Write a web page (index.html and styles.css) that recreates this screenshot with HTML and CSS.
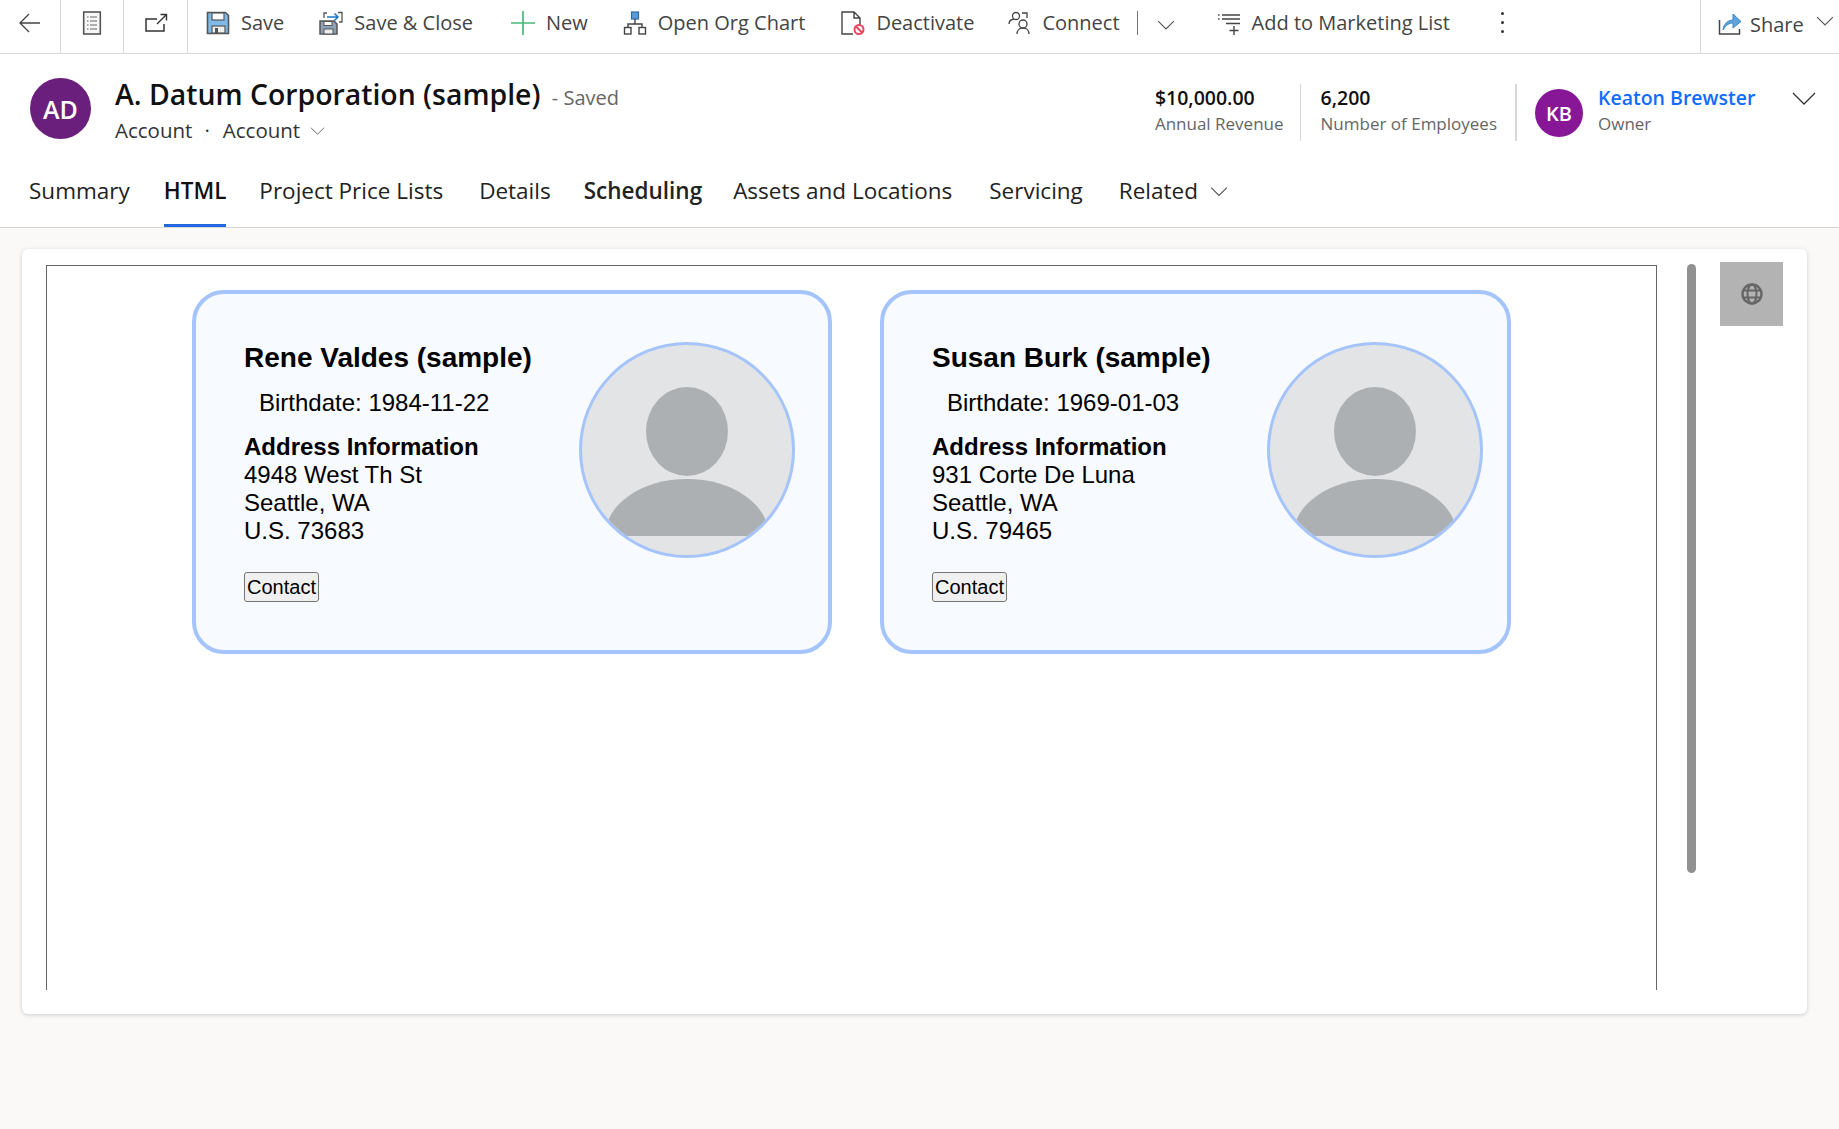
FILE: index.html
```html
<!DOCTYPE html>
<html lang="en">
<head>
  <meta charset="UTF-8">
  <meta name="viewport" content="width=device-width, initial-scale=1.0">
  <title>A. Datum Corporation (sample)</title>
  <link rel="stylesheet" href="styles.css">
</head>
<body>
  <nav class="command-bar">
    <div class="cmd-cell cmd-back">
      <svg viewBox="0 0 24 24" width="24" height="24"><path d="M22 12H2M11 3l-9 9 9 9" fill="none" stroke="#444" stroke-width="1.3"/></svg>
    </div>
    <div class="cmd-cell cmd-form">
      <svg viewBox="0 0 24 24" width="24" height="24"><rect x="3.7" y="1" width="16.6" height="22" fill="#f6f6f6" stroke="#555" stroke-width="1.6"/><path d="M7 6h1.5M10 6h7M7 10h1.5M10 10h7M7 14h1.5M10 14h7M7 18h1.5M10 18h7" stroke="#666" stroke-width="1.1"/></svg>
    </div>
    <div class="cmd-cell cmd-popout">
      <svg viewBox="0 0 24 24" width="24" height="24"><path d="M13 8H2v12h18v-7" fill="none" stroke="#333" stroke-width="1.5"/><path d="M13 13l9-9M16.5 3.5h6v6" fill="none" stroke="#333" stroke-width="1.4"/></svg>
    </div>
    <button class="cmd-btn cmd-save">
      <svg viewBox="0 0 24 24" width="24" height="24"><path d="M1.5 1.5h18l3 3v18h-21z" fill="#7fbbe9" stroke="#555" stroke-width="1.6"/><rect x="6" y="2" width="12" height="7" fill="#fff" stroke="#555" stroke-width="1.2"/><rect x="6" y="15" width="13" height="7" fill="#eee" stroke="#555" stroke-width="1.2"/><rect x="9" y="17" width="3" height="5" fill="#555"/></svg>
      Save
    </button>
    <button class="cmd-btn cmd-save-close">
      <svg viewBox="0 0 24 24" width="24" height="24"><path d="M1 10h14l3 3v10H1z" fill="#8da3b5" stroke="#555" stroke-width="1.5"/><rect x="5" y="10.5" width="8" height="4" fill="#fff" stroke="#555"/><rect x="5" y="18" width="9" height="5" fill="#eee" stroke="#555"/><path d="M5 7V2h3M19 1.5h4V11h-3" fill="none" stroke="#555" stroke-width="1.3"/><path d="M8 6h11M15.5 2.5 19 6l-3.5 3.5" fill="none" stroke="#1f78c4" stroke-width="1.5"/></svg>
      Save &amp; Close
    </button>
    <button class="cmd-btn cmd-new">
      <svg viewBox="0 0 24 24" width="24" height="24"><path d="M12 0v24M0 12h24" stroke="#4cb878" stroke-width="1.7"/></svg>
      New
    </button>
    <button class="cmd-btn cmd-org">
      <svg viewBox="0 0 24 24" width="24" height="24"><rect x="8.5" y="1" width="7" height="7" fill="#5b9bd8" stroke="#2c6ca8" stroke-width="1.2"/><path d="M12 8v5M5 16v-3h14v3" fill="none" stroke="#444" stroke-width="1.4"/><rect x="1.5" y="16.5" width="6.5" height="6.5" fill="#fff" stroke="#444" stroke-width="1.4"/><rect x="16" y="16.5" width="6.5" height="6.5" fill="#fff" stroke="#444" stroke-width="1.4"/></svg>
      Open Org Chart
    </button>
    <button class="cmd-btn cmd-deact">
      <svg viewBox="0 0 24 24" width="24" height="24"><path d="M12 23H1V1h12l6 6v9M13 1.5V7h6" fill="none" stroke="#444" stroke-width="1.4"/><circle cx="18" cy="18.5" r="4.5" fill="#fff" stroke="#e8475f" stroke-width="2"/><path d="M15 15.5l6 6" stroke="#e8475f" stroke-width="2"/></svg>
      Deactivate
    </button>
    <button class="cmd-btn cmd-connect">
      <svg viewBox="0 0 24 24" width="24" height="24"><circle cx="9" cy="5" r="3.5" fill="none" stroke="#444" stroke-width="1.3"/><path d="M2 13c0-3 2-4.5 5-5" fill="none" stroke="#444" stroke-width="1.3"/><circle cx="16" cy="13" r="4" fill="none" stroke="#444" stroke-width="1.3"/><path d="M10 23c0-3 2-6 6-6s6 3 6 6M15 2h5v5" fill="none" stroke="#444" stroke-width="1.3"/></svg>
      Connect
    </button>
    <span class="cmd-sep"></span>
    <svg class="chevron cmd-more" viewBox="0 0 16 16" width="18" height="18"><path d="M1 4.5l7 7 7-7" fill="none" stroke="#555" stroke-width="1"/></svg>
    <button class="cmd-btn cmd-market">
      <svg viewBox="0 0 24 24" width="24" height="24"><path d="M1 4h1.5M1 8h1.5M5 4h18M5 8h18M9 12.5h14" fill="none" stroke="#444" stroke-width="1.3"/><path d="M17 15v9M12.5 19.5h9" stroke="#444" stroke-width="1.4"/></svg>
      Add to Marketing List
    </button>
    <span class="cmd-dots"><i></i><i></i><i></i></span>
    <div class="cmd-share">
      <svg viewBox="0 0 24 24" width="24" height="24"><path d="M1.5 8v14h20v-5" fill="none" stroke="#444" stroke-width="1.5"/><path d="M5 18c.5-6 5-10 10-10V2l8 7.5-8 6.5v-5c-4 0-7 2-10 7z" fill="#5ea3dc" stroke="#3f86c4"/></svg>
      <span>Share</span>
      <svg class="chevron" viewBox="0 0 16 16" width="18" height="18"><path d="M1 4.5l7 7 7-7" fill="none" stroke="#555" stroke-width="1"/></svg>
    </div>
  </nav>

  <header class="record-header">
    <div class="avatar avatar-ad">AD</div>
    <div class="record-title">
      <h1>A. Datum Corporation (sample) <span class="saved">- Saved</span></h1>
      <div class="record-type">
        <span>Account</span><span class="dot">·</span><span>Account</span>
        <svg class="chevron" viewBox="0 0 16 16" width="15" height="15"><path d="M1 5l7 7 7-7" fill="none" stroke="#666" stroke-width="1"/></svg>
      </div>
    </div>
    <div class="header-fields">
      <div class="field field-revenue"><strong>$10,000.00</strong><span>Annual Revenue</span></div>
      <div class="field field-employees"><strong>6,200</strong><span>Number of Employees</span></div>
      <div class="owner">
        <div class="avatar avatar-kb">KB</div>
        <div class="field"><a href="#">Keaton Brewster</a><span>Owner</span></div>
        <svg class="chevron" viewBox="0 0 24 24" width="24" height="24"><path d="M1 7l11 11L23 7" fill="none" stroke="#333" stroke-width="1.3"/></svg>
      </div>
    </div>
  </header>

  <div class="tabs">
    <a class="tab">Summary</a>
    <a class="tab tab-html active">HTML</a>
    <a class="tab tab-price">Project Price Lists</a>
    <a class="tab tab-details">Details</a>
    <a class="tab tab-sched">Scheduling</a>
    <a class="tab tab-assets">Assets and Locations</a>
    <a class="tab tab-serv">Servicing</a>
    <a class="tab tab-related">Related
      <svg class="chevron" viewBox="0 0 16 16" width="18" height="18"><path d="M1 5l7 7 7-7" fill="none" stroke="#555" stroke-width="1"/></svg>
    </a>
  </div>

  <main class="content">
    <section class="panel">
      <div class="web-frame">
        <article class="contact-card">
          <div class="contact-info">
            <h2>Rene Valdes (sample)</h2>
            <p class="birthdate">Birthdate: 1984-11-22</p>
            <h3>Address Information</h3>
            <p class="address">4948 West Th St<br>Seattle, WA<br>U.S. 73683</p>
            <button class="contact-btn">Contact</button>
          </div>
          <div class="photo"><div class="photo-head"></div><div class="photo-body"></div></div>
        </article>
        <article class="contact-card contact-card-narrow">
          <div class="contact-info">
            <h2>Susan Burk (sample)</h2>
            <p class="birthdate">Birthdate: 1969-01-03</p>
            <h3>Address Information</h3>
            <p class="address">931 Corte De Luna<br>Seattle, WA<br>U.S. 79465</p>
            <button class="contact-btn">Contact</button>
          </div>
          <div class="photo"><div class="photo-head"></div><div class="photo-body"></div></div>
        </article>
      </div>
      <div class="scroll-thumb"></div>
      <div class="globe-box">
        <svg viewBox="0 0 24 24" width="24" height="24"><circle cx="12" cy="12" r="9.5" fill="none" stroke="#666" stroke-width="2.4"/><ellipse cx="12" cy="12" rx="4.5" ry="9.5" fill="none" stroke="#666" stroke-width="2"/><path d="M3 8.5h18M3 15.5h18" stroke="#666" stroke-width="2"/></svg>
      </div>
    </section>
  </main>
</body>
</html>
```

FILE: styles.css
```css
* {
  box-sizing: border-box;
}

html, body {
  height: 100%;
}

body {
  margin: 0;
  background-color: #faf9f8;
  color: #222;
  font-family: "Open Sans", "Noto Sans", sans-serif;
  overflow: hidden;
}

/* command bar */
.command-bar {
  display: flex;
  align-items: center;
  height: 54px;
  background: #fff;
  border-bottom: 1px solid #d8d8d8;
  font-size: 20px;
  color: #444;
}

.cmd-cell {
  display: flex;
  align-items: center;
  justify-content: center;
  height: 53px;
  padding-bottom: 8px;
  border-right: 1px solid #d8d8d8;
}

.cmd-back { width: 61px; }
.cmd-form { width: 63px; }
.cmd-popout { width: 64px; }

.cmd-btn {
  display: flex;
  align-items: center;
  gap: 11px;
  padding: 0 0 8px;
  border: none;
  background: none;
  font: inherit;
  color: inherit;
}

.cmd-save { margin-left: 18px; }
.cmd-save-close { margin-left: 35px; }
.cmd-new { margin-left: 38px; }
.cmd-org { margin-left: 35px; }
.cmd-deact { margin-left: 36px; }
.cmd-connect { margin-left: 33px; }
.cmd-market { margin-left: 42px; }

.cmd-sep {
  width: 1px;
  height: 24px;
  margin: 0 0 8px 17px;
  background: #777;
}

.cmd-more {
  margin: 0 0 4px 19px;
}

.cmd-dots {
  display: flex;
  flex-direction: column;
  gap: 6px;
  margin: 0 0 8px 51px;
}

.cmd-dots i {
  width: 3px;
  height: 3px;
  border-radius: 50%;
  background: #333;
}

.cmd-share {
  display: flex;
  align-items: center;
  gap: 8px;
  width: 139px;
  height: 53px;
  margin-left: auto;
  padding: 0 0 5px 17px;
  border-left: 1px solid #d8d8d8;
}

.cmd-share .chevron {
  margin: 0 0 6px 4px;
}

/* record header */
.record-header {
  display: flex;
  align-items: flex-start;
  height: 100px;
  padding: 24px 0 0 30px;
  background: #fff;
}

.avatar {
  display: flex;
  align-items: center;
  justify-content: center;
  border-radius: 50%;
  color: #fff;
  font-weight: 600;
}

.avatar-ad {
  width: 61px;
  height: 61px;
  background: #6b1f7c;
  font-size: 25px;
}

.avatar-kb {
  width: 48px;
  height: 48px;
  margin-top: 5px;
  margin-right: 15px;
  background: #881798;
  font-size: 20px;
}

.record-title {
  margin-left: 24px;
  margin-top: -2px;
}

.record-title h1 {
  margin: 0;
  font-size: 28.4px;
  line-height: 37px;
  font-weight: 600;
  color: #111;
}

.saved {
  margin-left: 4px;
  font-size: 20px;
  font-weight: 400;
  color: #666;
}

.record-type {
  display: flex;
  align-items: center;
  font-size: 20.5px;
  color: #333;
}

.record-type .dot {
  margin: 0 13px 0 12px;
}

.record-type .chevron {
  margin-left: 10px;
}

.header-fields {
  display: flex;
  margin-left: auto;
  padding-top: 6px;
}

.field {
  display: flex;
  flex-direction: column;
  padding-top: 1px;
  line-height: 26px;
}

.field strong {
  font-size: 19.5px;
  font-weight: 600;
  color: #111;
}

.field span {
  font-size: 17px;
  color: #666;
}

.field a {
  font-size: 19.5px;
  font-weight: 600;
  color: #0f6cff;
  text-decoration: none;
}

.field-revenue {
  height: 57px;
  padding-right: 16px;
  border-right: 1px solid #d8d8d8;
}

.field-employees {
  height: 57px;
  padding-left: 20px;
  padding-right: 18px;
  border-right: 2px solid #d8d8d8;
}

.owner {
  display: flex;
  align-items: flex-start;
  width: 322px;
  padding-left: 18px;
}

.owner .chevron {
  margin-left: 37px;
  margin-top: 2px;
}

/* tabs */
.tabs {
  display: flex;
  align-items: stretch;
  height: 74px;
  padding-left: 29px;
  background: #fff;
  border-bottom: 1px solid #d8d8d8;
  font-size: 22.5px;
  color: #222;
}

.tab {
  display: flex;
  align-items: center;
  gap: 12px;
  height: 73px;
  padding-top: 3px;
  border-bottom: 3px solid transparent;
}

.tab-html { margin-left: 34px; }
.tab-price { margin-left: 33px; }
.tab-details { margin-left: 36px; }
.tab-sched { margin-left: 33px; font-weight: 600; }
.tab-assets { margin-left: 31px; }
.tab-serv { margin-left: 37px; }
.tab-related { margin-left: 36px; }

.tab.active {
  font-weight: 600;
  color: #111;
  border-bottom-color: #2266e3;
}

/* panel holding the web resource */
.content {
  padding: 21px 32px 0 22px;
}

.panel {
  position: relative;
  height: 765px;
  padding: 16px 0 0 24px;
  background: #fff;
  border-radius: 6px;
  box-shadow: 0 1px 4px rgba(0, 0, 0, 0.18);
}

.web-frame {
  display: flex;
  justify-content: center;
  align-items: flex-start;
  gap: 48px;
  width: 1611px;
  height: 725px;
  padding-top: 24px;
  border: 1px solid #666;
  border-bottom: none;
  font-family: "Liberation Sans", Arial, sans-serif;
  color: #000;
}

.scroll-thumb {
  position: absolute;
  left: 1665px;
  top: 15px;
  width: 9px;
  height: 609px;
  border-radius: 5px;
  background: #919191;
}

.globe-box {
  position: absolute;
  left: 1698px;
  top: 13px;
  display: flex;
  align-items: center;
  justify-content: center;
  width: 63px;
  height: 64px;
  background: #b3b3b3;
}

/* contact cards */
.contact-card {
  display: flex;
  align-items: flex-start;
  height: 364px;
  padding: 48px 33px 0 48px;
  background: #f7faff;
  border: 4px solid #a4c4fb;
  border-radius: 32px;
}

.contact-card-narrow {
  padding-right: 24px;
}

.contact-info {
  width: 335px;
}

.contact-info h2 {
  margin: 0;
  font-size: 28px;
  line-height: 31px;
}

.birthdate {
  margin: 16px 0 0 15px;
  font-size: 24px;
  line-height: 28px;
}

.contact-info h3 {
  margin: 16px 0 0;
  font-size: 24px;
  line-height: 28px;
}

.address {
  margin: 0;
  font-size: 24px;
  line-height: 28px;
}

.contact-btn {
  display: block;
  width: 75px;
  height: 30px;
  margin-top: 27px;
  padding: 0;
  background: #f0f0f0;
  border: 1px solid #767676;
  border-radius: 3px;
  font-family: inherit;
  font-size: 20px;
  color: #000;
}

.photo {
  position: relative;
  width: 216px;
  height: 216px;
  overflow: hidden;
  background: #e3e4e6;
  border: 3px solid #a4c4fb;
  border-radius: 50%;
}

.photo-head {
  position: absolute;
  left: 64px;
  top: 42px;
  width: 82px;
  height: 89px;
  border-radius: 50%;
  background: #adb0b2;
}

.photo-body {
  position: absolute;
  left: 23px;
  top: 134px;
  width: 164px;
  height: 57px;
  border-radius: 82px 82px 0 0 / 57px 57px 0 0;
  background: #adb0b2;
}
```
